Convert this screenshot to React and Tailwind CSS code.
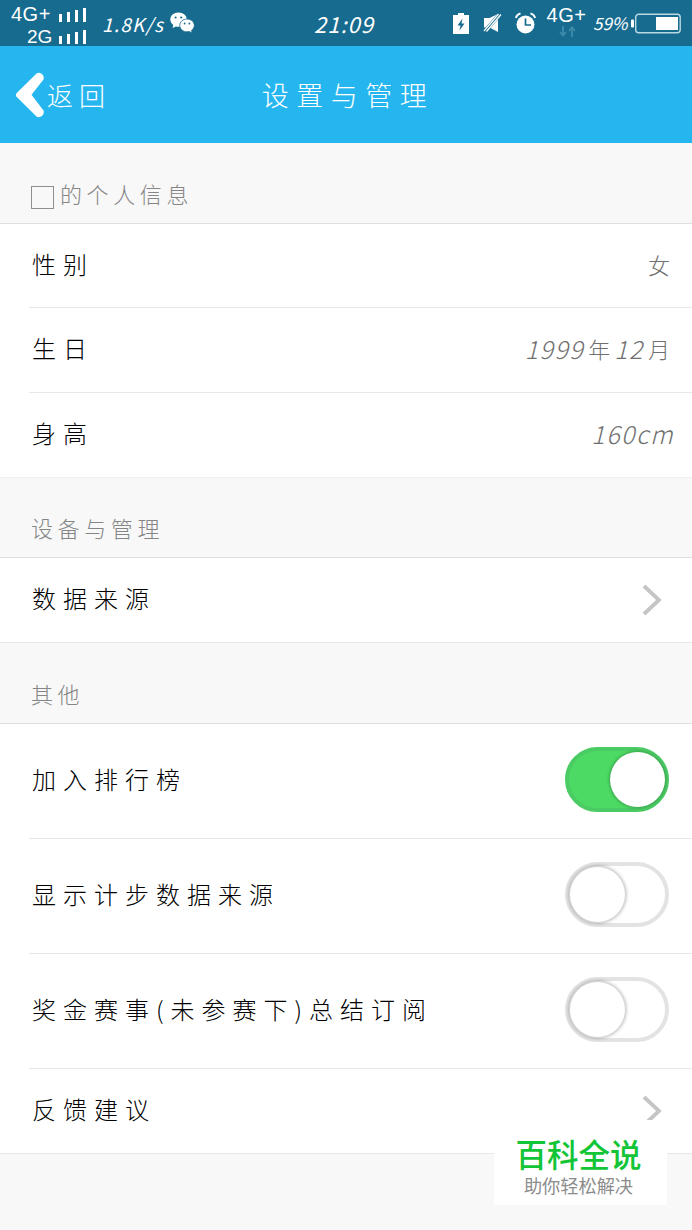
import React, { useState } from 'react';

const HAND = "font-['Noto_Sans_CJK_SC',sans-serif] font-light";

const PROFILE = [
  { label: '性别', value: [{ text: '女', cjk: true }] },
  {
    label: '生日',
    value: [
      { text: '1999' },
      { text: '年', cjk: true },
      { text: '12' },
      { text: '月', cjk: true }
    ]
  },
  { label: '身高', value: [{ text: '160cm' }] }
];

const SWITCHES = [
  { id: 'rank', label: '加入排行榜' },
  { id: 'source', label: '显示计步数据来源' },
  { id: 'summary', label: '奖金赛事(未参赛下)总结订阅' }
];

const SignalBars = () => (
  <svg className="mt-[2px]" width="27" height="14" viewBox="0 0 27 14" fill="#fff">
    <rect x="0" y="6" width="3" height="8" />
    <rect x="8" y="4" width="3" height="10" />
    <rect x="16" y="2" width="3" height="12" />
    <rect x="24" y="0" width="3" height="14" />
  </svg>
);

const WechatIcon = () => (
  <svg width="25" height="22" viewBox="0 0 25 22">
    <path d="M8.5 0.5C3.8 0.5 0.3 3.6 0.3 7.6c0 2.2 1.1 4.1 3 5.4L2.5 16l3.4-1.6c.9.2 1.8.3 2.8.3 4.6 0 8.1-3.1 8.1-7.1S13.2.5 8.5.5z" fill="#fff" />
    <path d="M17 7c-4 0-7.2 2.8-7.2 6.4s3.2 6.400 7.2 6.400c.8 0 1.6-.1 2.3-.3l3 1.5-.8-2.7c1.7-1.2 2.8-2.9 2.8-4.9C24.300 9.800 21 7 17 7z" fill="#fff" stroke="#166b8f" strokeWidth="0.800" />
    <circle cx="5.600" cy="5.500" r="1.100" fill="#166b8f" />
    <circle cx="11.200" cy="5.500" r="1.100" fill="#166b8f" />
    <circle cx="14.600" cy="11.500" r="0.900" fill="#166b8f" />
    <circle cx="19.400" cy="11.500" r="0.900" fill="#166b8f" />
  </svg>
);

const ChargeIcon = () => (
  <svg width="16" height="21" viewBox="0 0 16 21">
    <path d="M0 2h5V0h6v2h5v19H0z" fill="#fff" />
    <path d="M9.500 5.500L4.500 12.500h3L6.500 17.500l5-7h-3z" fill="#166b8f" />
  </svg>
);

const MuteIcon = () => (
  <svg width="19" height="20" viewBox="0 0 19 20">
    <path d="M1 5h5.500L15 1v18l-8.500-4.500H1z" fill="#fff" />
    <path d="M1.500 19L17 1" stroke="#166b8f" strokeWidth="4.200" />
    <path d="M1 18L15.500 1M3.500 18.500L18 1.500" stroke="#fff" strokeWidth="1.300" />
  </svg>
);

const AlarmIcon = () => (
  <svg width="21" height="22" viewBox="0 0 21 22" fill="none">
    <circle cx="10.500" cy="12.500" r="9" fill="#fff" />
    <path d="M0.800 6a7 7 0 0 1 4.700-4.700M20.200 6a7 7 0 0 0-4.700-4.700" stroke="#fff" strokeWidth="1.800" />
    <path d="M10.500 6.500V13H16" stroke="#166b8f" strokeWidth="1.700" />
  </svg>
);

const BatteryIcon = () => (
  <svg width="50" height="21" viewBox="0 0 50 21">
    <rect x="0" y="6.500" width="3" height="8" rx="1" fill="#fff" />
    <rect x="4.700" y="1.200" width="44.500" height="18.600" rx="3" fill="none" stroke="#b9d9e4" strokeWidth="1.400" />
    <rect x="25" y="4" width="22" height="13" fill="#fff" />
  </svg>
);

const StatusBar = () => (
  <div className="flex h-[46px] items-center bg-[#166b8f] font-['Liberation_Sans',sans-serif] text-white">
    <div className="ml-[11px] flex w-[75px] flex-col pt-1">
      <div className="flex h-[22px] items-center justify-between">
        <span className="text-[20px] leading-none tracking-[0.5px]">4G+</span>
        <SignalBars />
      </div>
      <div className="flex h-[22px] items-center justify-between pl-4">
        <span className="text-[19px] leading-none">2G</span>
        <SignalBars />
      </div>
    </div>
    <span className="ml-4 w-[68px] font-['Noto_Sans_CJK_SC',sans-serif] text-[19px] leading-none tracking-[1.200px] italic">1.8K/s</span>
    <WechatIcon />
    <span className="ml-[119px] w-[64px] font-['Noto_Sans_CJK_SC',sans-serif] text-[22px] leading-none tracking-[1px] italic">21:09</span>
    <div className="ml-auto flex items-center">
      <ChargeIcon />
      <span className="ml-[14px]"><MuteIcon /></span>
      <span className="ml-[13px]"><AlarmIcon /></span>
      <div className="ml-[9px] flex w-[43px] flex-col items-center pb-[6px]">
        <span className="text-[20px] leading-[22px] tracking-[0.500px]">4G+</span>
        <svg width="16" height="11" viewBox="0 0 16 11" fill="none" stroke="#3e8ba9" strokeWidth="1.800">
          <path d="M4 0v9M1 6l3 3.500L7 6M13 11V2M10 5l3-3.500L16 5" />
        </svg>
      </div>
      <span className="-mt-[2px] ml-[5px] w-[38px] font-['Noto_Sans_CJK_SC',sans-serif] text-[17px] leading-none italic">59%</span>
      <BatteryIcon />
      <span className="w-[11px]" />
    </div>
  </div>
);

const NavBar = () => (
  <div className={`${HAND} grid h-[97px] grid-cols-3 items-center bg-[#26b6ef] text-white`}>
    <button className="flex items-center pl-4">
      <svg width="28" height="46" viewBox="0 0 28 46">
        <path d="M0.800 21L20.500 1.500Q23 0 26 2Q28.500 4.500 27.500 7.500L15.500 22.800L27.500 38.500Q28.500 41.500 26 44Q23 46 20.500 44.500L0.800 25Q-1 23 0.800 21z" fill="#fff" />
      </svg>
      <span className="ml-[3px] text-[26px] leading-none tracking-[6px]">返回</span>
    </button>
    <h1 className="pl-[31px] text-[27px] leading-none font-light tracking-[7.500px] whitespace-nowrap">设置与管理</h1>
  </div>
);

const SectionTitle = ({ children, className = 'h-[81px]' }) => (
  <div className={`flex items-end border-b border-[#dfdfdf] bg-[#f8f8f8] pb-[19px] pl-[31px] text-[22px] leading-[22px] tracking-[4.600px] text-[#858585] ${className}`}>
    {children}
  </div>
);

const Row = ({ label, children, last, className = 'h-[85px]' }) => (
  <div className={`flex items-center bg-white ${className}`}>
    <div className={`ml-[29px] flex h-full flex-1 items-center justify-between pb-1 pl-[3px] ${last ? '' : 'border-b border-[#e8e8e8]'}`}>
      <span className="text-[24px] leading-none tracking-[7px] text-black">{label}</span>
      {children}
    </div>
  </div>
);

const Value = ({ parts }) => (
  <span className="flex items-center pr-[18px] text-[#707070]">
    {parts.map((part) => (
      <span
        key={part.text}
        className={part.cjk ? 'mx-1 text-[22px] leading-none' : 'text-[25px] leading-none tracking-[1.500px] italic'}
      >
        {part.text}
      </span>
    ))}
  </span>
);

const Chevron = () => (
  <svg className="mt-1 mr-[30px]" width="20" height="32" viewBox="0 0 20 32">
    <path d="M2 2l15 14L2 30" fill="none" stroke="#c5c5c5" strokeWidth="3.800" />
  </svg>
);

const Toggle = ({ on, onClick }) => (
  <button
    onClick={onClick}
    className={`mr-[23px] flex h-[65px] w-[104px] items-center rounded-full border-4 ${
      on ? 'justify-end border-[#4bcb64] bg-[#4cd964]' : 'border-[#e3e3e3] bg-white pl-[1px]'
    }`}
  >
    <span className={`size-[55px] rounded-full bg-white ${on ? 'shadow-[0_0_3px_1px_rgba(0,0,0,0.25)]' : 'shadow-[0_0_3px_2px_rgba(0,0,0,0.2)]'}`} />
  </button>
);

const App = () => {
  const [enabled, setEnabled] = useState({ rank: true, source: false, summary: false });

  const toggle = (id) => {
    setEnabled({ ...enabled, [id]: !enabled[id] });
  };

  return (
    <div className="relative h-[1230px] w-[692px] overflow-hidden bg-[#f8f8f8]">
      <StatusBar />
      <NavBar />
      <div className={HAND}>
        <SectionTitle>
          <span className="-mb-[5px] mr-[6px] size-[23px] border border-[#8f8f8f]" />
          的个人信息
        </SectionTitle>
        {PROFILE.map((item, index) => (
          <Row
            key={item.label}
            label={item.label}
            last={index === PROFILE.length - 1}
            className={index === 1 ? 'h-[85px]' : 'h-[84px]'}
          >
            <Value parts={item.value} />
          </Row>
        ))}

        <SectionTitle className="h-[81px] border-t border-t-[#eeeeee]">设备与管理</SectionTitle>
        <Row label="数据来源" last className="h-[84px]">
          <Chevron />
        </Row>

        <SectionTitle className="h-[82px] border-t border-t-[#e8e8e8]">其他</SectionTitle>
        {SWITCHES.map((item) => (
          <Row key={item.id} label={item.label} className="h-[115px]">
            <Toggle on={enabled[item.id]} onClick={() => toggle(item.id)} />
          </Row>
        ))}
        <Row label="反馈建议" last className="h-[85px] border-b border-[#e8e8e8]">
          <Chevron />
        </Row>
      </div>

      {/* floating brand card */}
      <div className="absolute top-[1120px] left-[494px] flex h-[85px] w-[173px] flex-col items-center bg-white pt-[16px] pr-[4px] font-['Noto_Sans_CJK_SC',sans-serif]">
        <span className="text-[31.500px] leading-[34px] font-medium text-[#12c537]">百科全说</span>
        <span className="mt-[5px] text-[18.200px] leading-[20px] text-[#8c8c8c]">助你轻松解决</span>
      </div>
    </div>
  );
};

export default App;
